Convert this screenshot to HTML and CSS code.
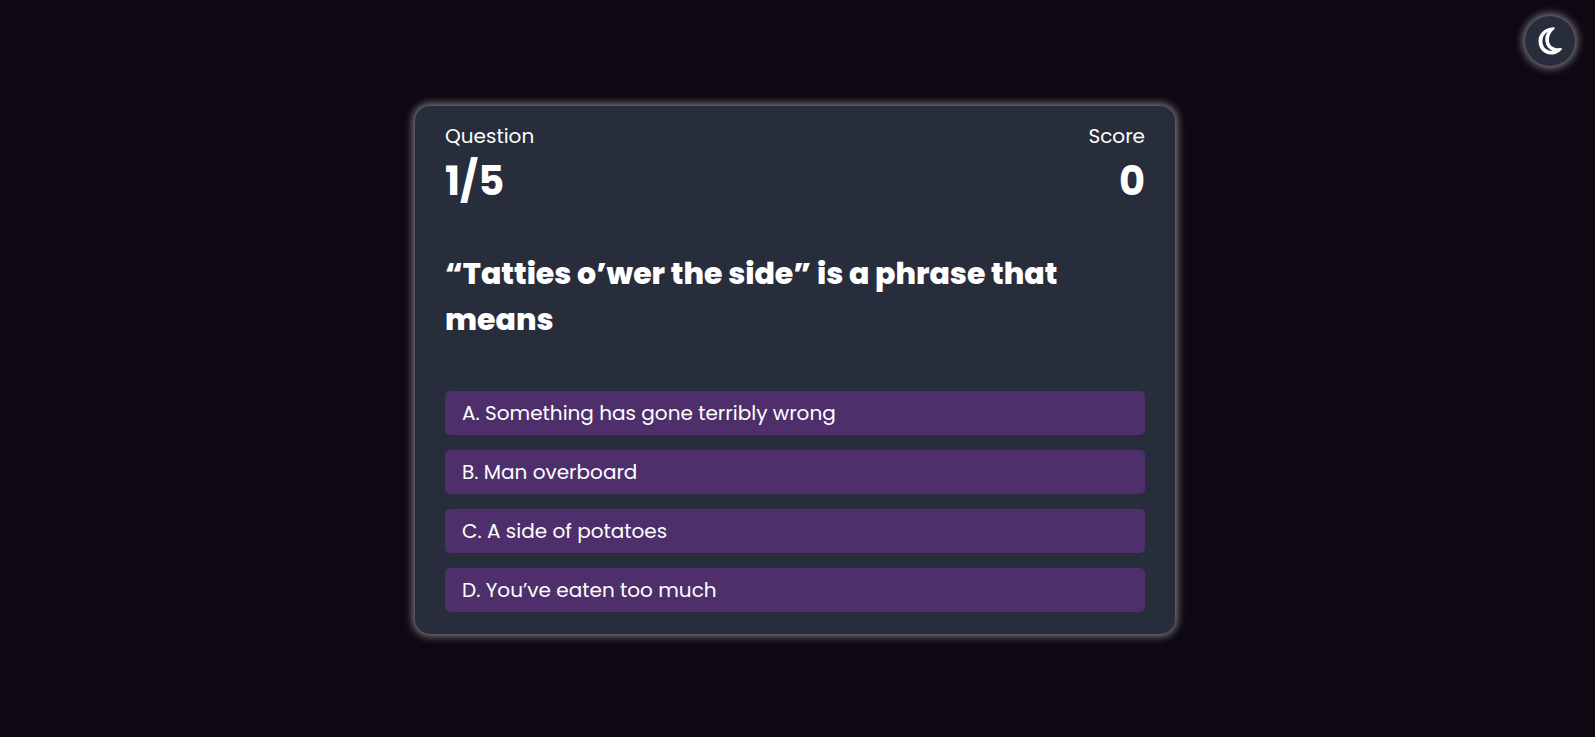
FILE: index.html
```html
<!DOCTYPE html>
<html lang="en">
<head>
  <meta charset="utf-8">
  <meta name="viewport" content="width=device-width, initial-scale=1">
  <title>Quiz</title>
  <link rel="stylesheet" href="styles.css">
</head>
<body>
  <button class="theme-toggle" type="button" aria-label="Toggle dark mode">
    <svg class="theme-icon" viewBox="0 0 24 28" aria-hidden="true">
      <path fill="currentColor" fill-rule="evenodd" d="M15.500.3C7 .8.5 6.500.5 14.200S6 27.500 13 27.500c4.500 0 8.800-2.200 10.800-5.300.3-.8-.2-1.300-1-1.100C16 22 11.500 19 11 14c-.4-4.500 1.500-8.500 5.200-11.700.8-.9.400-2.100-.7-2zM10 4.500C7.600 7.500 6.900 11 7.400 14.500 8.100 19 10.700 22.200 14.500 23.900 8.500 24 4.400 19.700 4.400 14.200 4.400 10 6.400 6.500 10 4.500z"/>
    </svg>
  </button>
  <main class="page">
    <section class="card">
      <header class="status">
        <div class="stat">
          <p class="stat-label">Question</p>
          <p class="stat-value">1/5</p>
        </div>
        <div class="stat stat-right">
          <p class="stat-label">Score</p>
          <p class="stat-value">0</p>
        </div>
      </header>
      <h1 class="question">“Tatties o’wer the side” is a phrase that means</h1>
      <div class="answers">
        <button class="answer" type="button">A. Something has gone terribly wrong</button>
        <button class="answer" type="button">B. Man overboard</button>
        <button class="answer" type="button">C. A side of potatoes</button>
        <button class="answer" type="button">D. You’ve eaten too much</button>
      </div>
    </section>
  </main>
</body>
</html>
```
FILE: styles.css
```css
* {
  box-sizing: border-box;
}

body {
  margin: 0;
  background: #0e0813;
  color: #fff;
  font-family: Poppins, Inter, "Open Sans", sans-serif;
}

.page {
  display: flex;
  align-items: center;
  justify-content: center;
  min-height: 100vh;
  padding: 20px 21px 17px 16px;
}

.card {
  width: 100%;
  max-width: 760px;
  padding: 15px 30px 22px;
  border-radius: 15px;
  background: #282d3c;
  box-shadow: 0 0 8px 2px rgba(255, 255, 255, 0.5);
}

.status {
  display: flex;
  justify-content: space-between;
}

.stat-right {
  text-align: right;
}

.stat-label,
.stat-value {
  margin: 0;
}

.stat-label {
  font-size: 20px;
  line-height: 30px;
}

.stat-value {
  font-size: 40px;
  font-weight: 700;
  line-height: 60px;
}

.question {
  margin: 40px 0 48px;
  font-size: 30px;
  font-weight: 800;
  line-height: 46px;
}

.answers {
  display: grid;
  gap: 15px;
}

.answer {
  padding: 7px 17px;
  border: 0;
  border-radius: 5px;
  background: #4e2f6b;
  color: inherit;
  font: inherit;
  font-size: 20px;
  line-height: 30px;
  text-align: left;
  cursor: pointer;
}

.theme-toggle {
  position: fixed;
  top: 16px;
  right: 20px;
  display: flex;
  align-items: center;
  justify-content: center;
  width: 50px;
  height: 50px;
  padding: 0;
  border: 0;
  border-radius: 50%;
  background: #282d3c;
  color: #fff;
  box-shadow: 0 0 8px 2px rgba(255, 255, 255, 0.5);
  cursor: pointer;
}

.theme-icon {
  width: 24px;
  height: 28px;
}
```
